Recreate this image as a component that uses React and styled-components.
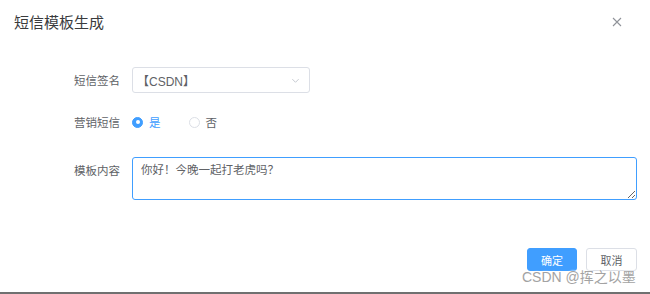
import React from "react";
import styled, { createGlobalStyle } from "styled-components";

const Global = createGlobalStyle`
  html, body { margin: 0; padding: 0; background: #fff; }
  body { font-family: "Noto Sans CJK SC", "Noto Sans", sans-serif; }
  * { box-sizing: border-box; }
`;

const Dialog = styled.div`
  position: relative;
  width: 650px;
  height: 294px;
  background: #fff;
  border-bottom: 2px solid #707070;
  display: flex;
  flex-direction: column;
`;

const Header = styled.div`
  height: 44px;
  display: flex;
  align-items: center;
  justify-content: space-between;
  padding: 0 28px 0 14px;
`;

const Title = styled.div`
  font-size: 15px;
  color: #3a3b3d;
  line-height: 20px;
`;

const Close = styled.div`
  width: 10px;
  height: 10px;
  display: flex;
  color: #909399;
`;

const Form = styled.div`
  display: flex;
  flex-direction: column;
  padding-top: 23px;
`;

const Row = styled.div`
  display: flex;
  align-items: ${(p) => (p.$top ? "flex-start" : "center")};
  gap: 12px;
  margin-top: ${(p) => p.$mt || 0}px;
  min-height: 26px;
`;

const Label = styled.div`
  width: 120px;
  text-align: right;
  font-size: 11.5px;
  color: #606266;
  line-height: 26px;
`;

const Select = styled.div`
  width: 178px;
  height: 26px;
  border: 1px solid #dcdfe6;
  border-radius: 3px;
  display: flex;
  align-items: center;
  justify-content: space-between;
  padding: 0 9px 0 4px;
  font-size: 12px;
  color: #606266;
  font-family: "Liberation Sans", "Noto Sans CJK SC", sans-serif;
`;

const Chevron = styled.svg`
  width: 9px;
  height: 9px;
  color: #c0c4cc;
`;

const RadioGroup = styled.div`
  display: flex;
  align-items: center;
  gap: 28px;
`;

const RadioItem = styled.label`
  display: flex;
  align-items: center;
  gap: 6px;
  font-size: 11.5px;
  color: ${(p) => (p.$checked ? "#409eff" : "#606266")};
`;

const Dot = styled.span`
  width: 11px;
  height: 11px;
  border-radius: 50%;
  border: 1px solid ${(p) => (p.$checked ? "#409eff" : "#dcdfe6")};
  background: ${(p) => (p.$checked ? "#409eff" : "#fff")};
  display: flex;
  align-items: center;
  justify-content: center;
  &::after {
    content: "";
    width: 4px;
    height: 4px;
    border-radius: 50%;
    background: #fff;
    display: ${(p) => (p.$checked ? "block" : "none")};
  }
`;

const TextArea = styled.textarea`
  width: 505px;
  height: 43px;
  border: 1px solid #409eff;
  border-radius: 3px;
  padding: 3px 8px;
  font-family: "Noto Sans CJK SC", "Noto Sans", sans-serif;
  font-size: 11.5px;
  line-height: 17px;
  color: #606266;
  outline: none;
  resize: vertical;
  margin: 0;
`;

const Footer = styled.div`
  display: flex;
  justify-content: flex-end;
  gap: 9px;
  padding-right: 13px;
  margin-top: 48px;
`;

const Button = styled.button`
  width: ${(p) => (p.$primary ? 50 : 51)}px;
  height: 23px;
  border-radius: 3px;
  border: 1px solid ${(p) => (p.$primary ? "#409eff" : "#dcdfe6")};
  background: ${(p) => (p.$primary ? "#409eff" : "#fff")};
  color: ${(p) => (p.$primary ? "#fff" : "#606266")};
  font-family: "Noto Sans CJK SC", "Noto Sans", sans-serif;
  font-size: 11px;
  padding: 0;
  display: flex;
  align-items: center;
  justify-content: center;
`;

const Watermark = styled.div`
  position: absolute;
  left: 522px;
  top: 268px;
  font-size: 14px;
  line-height: 19px;
  color: #a3a3a3;
  text-shadow: 0 0 2px #fff, 0 0 2px #fff;
  font-family: "Liberation Sans", "Noto Sans CJK SC", sans-serif;
  white-space: nowrap;
`;

export default function App() {
  return (
    <>
      <Global />
      <Dialog>
        <Header>
          <Title>短信模板生成</Title>
          <Close>
            <svg viewBox="0 0 10 10" width="10" height="10">
              <path d="M1 1L9 9M9 1L1 9" stroke="currentColor" strokeWidth="1.1" />
            </svg>
          </Close>
        </Header>
        <Form>
          <Row>
            <Label>短信签名</Label>
            <Select>
              <span>【CSDN】</span>
              <Chevron viewBox="0 0 10 10">
                <path d="M1.5 3.5L5 7L8.5 3.5" fill="none" stroke="currentColor" strokeWidth="1" />
              </Chevron>
            </Select>
          </Row>
          <Row $mt={16}>
            <Label>营销短信</Label>
            <RadioGroup>
              <RadioItem $checked>
                <Dot $checked />
                是
              </RadioItem>
              <RadioItem>
                <Dot />
                否
              </RadioItem>
            </RadioGroup>
          </Row>
          <Row $mt={22} $top>
            <Label>模板内容</Label>
            <TextArea defaultValue="你好！今晚一起打老虎吗？" />
          </Row>
        </Form>
        <Footer>
          <Button $primary>确定</Button>
          <Button>取消</Button>
        </Footer>
        <Watermark>CSDN @挥之以墨</Watermark>
      </Dialog>
    </>
  );
}
